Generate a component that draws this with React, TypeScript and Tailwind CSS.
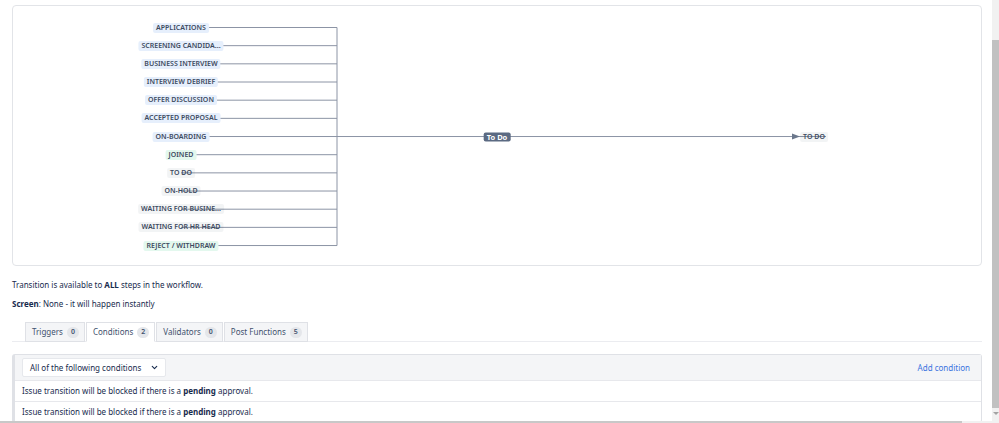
import React from 'react';
import { ChevronDown } from 'lucide-react';

type Tone = 'blue' | 'green' | 'gray';

const steps: { name: string; tone: Tone }[] = [
  { name: 'APPLICATIONS', tone: 'blue' },
  { name: 'SCREENING CANDIDA...', tone: 'blue' },
  { name: 'BUSINESS INTERVIEW', tone: 'blue' },
  { name: 'INTERVIEW DEBRIEF', tone: 'blue' },
  { name: 'OFFER DISCUSSION', tone: 'blue' },
  { name: 'ACCEPTED PROPOSAL', tone: 'blue' },
  { name: 'ON-BOARDING', tone: 'blue' },
  { name: 'JOINED', tone: 'green' },
  { name: 'TO DO', tone: 'gray' },
  { name: 'ON-HOLD', tone: 'gray' },
  { name: 'WAITING FOR BUSINE...', tone: 'gray' },
  { name: 'WAITING FOR HR HEAD', tone: 'gray' },
  { name: 'REJECT / WITHDRAW', tone: 'green' },
];

const toneClass: Record<Tone, string> = {
  blue: 'bg-[#e6effc]',
  green: 'bg-[#e3f8ee]',
  gray: 'bg-[#091e42]/[0.05]',
};

const LABEL_X = 168;
const JOIN_X = 324;
const ROW_Y = (i: number) => 21.5 + i * 18.17;
const TARGET_X = 801;

const StepLabel = ({ name, tone, x, y }: { name: string; tone: Tone; x: number; y: number }) => (
  <span
    className={`absolute -translate-x-1/2 -translate-y-1/2 whitespace-nowrap rounded-[2px] px-[3px] text-[7px] leading-[10px] font-semibold text-[#3d4a60] ${toneClass[tone]}`}
    style={{ left: x, top: y }}
  >
    {name}
  </span>
);

const Diagram = () => {
  const last = ROW_Y(steps.length - 1);
  const mid = ROW_Y(6);
  return (
    <div className="relative h-[261px] rounded-[4px] border border-[#e2e4e8] bg-white">
      <svg className="absolute inset-0 h-full w-full" fill="none">
        {steps.map((s, i) => (
          <line key={s.name} x1={LABEL_X} y1={ROW_Y(i)} x2={JOIN_X} y2={ROW_Y(i)} stroke="#8c94a5" strokeWidth={1} />
        ))}
        <line x1={JOIN_X} y1={ROW_Y(0)} x2={JOIN_X} y2={last} stroke="#8c94a5" strokeWidth={1} />
        <line x1={JOIN_X} y1={mid} x2={TARGET_X + 12} y2={mid} stroke="#8c94a5" strokeWidth={1} />
        <path d={`M${TARGET_X - 22} ${mid - 3} L${TARGET_X - 14} ${mid} L${TARGET_X - 22} ${mid + 3} Z`} fill="#6b778c" />
      </svg>
      {steps.map((s, i) => (
        <StepLabel key={s.name} name={s.name} tone={s.tone} x={LABEL_X} y={ROW_Y(i)} />
      ))}
      <span
        className="absolute -translate-x-1/2 -translate-y-1/2 rounded-[2px] bg-[#5b6a82] px-[3px] text-[7.5px] leading-[9px] font-bold text-white"
        style={{ left: 484, top: mid }}
      >
        To Do
      </span>
      <StepLabel name="TO DO" tone="gray" x={TARGET_X} y={mid} />
    </div>
  );
};

const Count = ({ n }: { n: number }) => (
  <span className="ml-[4px] inline-flex h-[11px] min-w-[12px] items-center justify-center rounded-full bg-[#e4e6ea] px-[3px] text-[7px] font-semibold text-[#42526e]">
    {n}
  </span>
);

const tabs = [
  { label: 'Triggers', n: 0 },
  { label: 'Conditions', n: 2, active: true },
  { label: 'Validators', n: 0 },
  { label: 'Post Functions', n: 5 },
];

const ConditionRow = () => (
  <div className="flex h-[21px] items-center border-t border-[#e7e8ec] px-[7px] text-[8px] text-[#172b4d]">
    Issue transition will be blocked if there is a&nbsp;<b className="font-bold">pending</b>&nbsp;approval.
  </div>
);

export default function App() {
  return (
    <div className="flex h-[423px] w-[999px] overflow-hidden bg-white font-['Noto_Sans',sans-serif]">
      <div className="flex flex-1 flex-col">
        <div className="h-[421px] pl-[12px] pr-[10px] pt-[5px]">
          <Diagram />

          <p className="mt-[14px] text-[8px] leading-[10px] text-[#172b4d]">
            Transition is available to <b className="font-bold">ALL</b> steps in the workflow.
          </p>
          <p className="mt-[9px] text-[8px] leading-[10px] text-[#172b4d]">
            <b className="font-bold">Screen</b>: None - it will happen instantly
          </p>

          <div className="mt-[13px] flex border-b border-[#ebecf0] pl-[13px]">
            {tabs.map((t) => (
              <div
                key={t.label}
                className={`-mb-px mr-[1px] flex h-[20px] items-center border border-[#dfe1e6] pl-[6px] pr-[5px] text-[8px] text-[#42526e] ${
                  t.active ? 'border-b-white bg-white' : 'bg-[#f4f5f7]'
                }`}
              >
                {t.label}
                <Count n={t.n} />
              </div>
            ))}
          </div>

          <div className="mt-[12px] rounded-[3px] border border-l-[3px] border-[#dfe1e6] bg-white">
            <div className="flex h-[25px] items-center justify-between bg-[#f4f5f7] pl-[7px] pr-[11px]">
              <div className="flex h-[19px] w-[144px] items-center justify-between rounded-[2px] border border-[#e6e8ec] bg-white pl-[7px] pr-[6px] text-[8px] text-[#172b4d]">
                All of the following conditions
                <ChevronDown className="h-[9px] w-[9px] text-[#172b4d]" strokeWidth={3} />
              </div>
              <span className="text-[8px] text-[#3b73e0]">Add condition</span>
            </div>
            <ConditionRow />
            <ConditionRow />
          </div>
        </div>
        <div className="h-[2px] bg-[#f1f1f1]">
          <div className="h-full w-[962px] bg-[#c8c8c8]" />
        </div>
      </div>
      <div className="flex w-[7px] flex-col bg-[#f1f1f1]">
        <div className="mt-[40px] h-[368px] bg-[#c1c1c1]" />
        <div className="mt-[4px] flex justify-center">
          <span className="h-0 w-0 border-x-[3px] border-t-[3px] border-x-transparent border-t-[#a3a3a3]" />
        </div>
      </div>
    </div>
  );
}
